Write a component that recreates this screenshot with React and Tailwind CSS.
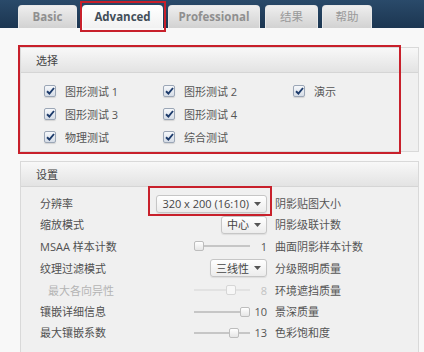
import React from 'react';

function Tab({ label, active, className, highlight, cjk }) {
  return (
    <div
      className={`relative h-[23px] rounded-t-[4px] flex items-center justify-center border border-b-0 ${
        active
          ? 'bg-gradient-to-b from-[#ffffff] to-[#f1f1f1] border-[#ffffff] text-[#434e59]'
          : 'bg-gradient-to-b from-[#eeeeee] to-[#d2d2d2] border-[#e8e8e8] text-[#8f8f8f]'
      } ${className}`}
    >
      <span className={`text-[11.5px] leading-none ${cjk ? 'font-normal text-[#999]' : 'font-bold'}`}>{label}</span>
      {highlight && (
        <span className="absolute left-[-3px] top-[-5px] right-[-4px] bottom-[-4px] border-[2.5px] border-[#c8202b]" />
      )}
    </div>
  );
}

function Check() {
  return (
    <span className="w-[12px] h-[12px] rounded-[2px] border border-[#9ba6b6] bg-gradient-to-b from-[#f6f8fb] to-[#d6dde7] flex items-center justify-center shadow-[0_1px_1px_rgba(0,0,0,0.12)]">
      <svg width="9" height="8" viewBox="0 0 9 8">
        <path d="M1 4.2 L3.4 6.5 L8 1" fill="none" stroke="#1d3b6b" strokeWidth="1.9" />
      </svg>
    </span>
  );
}

function CheckItem({ label, className }) {
  return (
    <div className={`flex items-center gap-[9px] ${className}`}>
      <Check />
      <span className="text-[11px] text-[#555] leading-none">{label}</span>
    </div>
  );
}

function Caret() {
  return (
    <svg width="7" height="4" viewBox="0 0 7 4" className="ml-[5px]">
      <path d="M0 0 L7 0 L3.5 4 Z" fill="#555" />
    </svg>
  );
}

function Select({ value }) {
  return (
    <div className="h-[18px] flex items-center px-[5px] border border-[#c6c6c6] rounded-[3px] bg-gradient-to-b from-[#ffffff] to-[#ececec] shadow-[0_1px_1px_rgba(0,0,0,0.08)]">
      <span className="text-[11px] text-[#454545] leading-none">{value}</span>
      <Caret />
    </div>
  );
}

function Slider({ value, pos, disabled }) {
  return (
    <div className="flex items-center">
      <div className="relative w-[56px] h-[10px] flex items-center">
        <div className={`w-full h-[2px] ${disabled ? 'bg-[#e2e2e2]' : 'bg-[#c6c6c6]'}`} />
        <div
          className={`absolute top-0 w-[10px] h-[10px] rounded-[2px] border ${
            disabled ? 'border-[#d6d6d6] bg-[#f7f7f7]' : 'border-[#bdbdbd] bg-gradient-to-b from-[#ffffff] to-[#e6e6e6]'
          }`}
          style={{ left: pos }}
        />
      </div>
      <span
        className={`w-[17px] text-right text-[11px] leading-none ${disabled ? 'text-[#c2c2c2]' : 'text-[#555]'}`}
      >
        {value}
      </span>
    </div>
  );
}

function Row({ label, control, right, h, dim }) {
  return (
    <div className={`flex items-center ${h}`}>
      <div className="w-[227px] flex items-center justify-between">
        <span
          className={`text-[11px] leading-none ${dim ? 'pl-[8px] text-[#b4b4b4]' : 'text-[#505050]'}`}
        >
          {label}
        </span>
        {control}
      </div>
      <span className="ml-[8px] text-[11px] text-[#555] leading-none">{right}</span>
    </div>
  );
}

function PanelHeader({ title }) {
  return (
    <div className="h-[25px] flex items-center pl-[15px] bg-gradient-to-b from-[#f8f8f8] to-[#e3e3e3] border-b border-[#d5d5d5]">
      <span className="text-[11px] text-[#444] leading-none">{title}</span>
    </div>
  );
}

export default function App() {
  return (
    <div className="w-[424px] h-[352px] overflow-hidden bg-[#f8f8f8] font-['Open_Sans','Noto_Sans_CJK_SC',sans-serif]">
      {/* tab bar */}
      <div className="h-[28px] bg-gradient-to-b from-[#2a4a6a] to-[#1c3651] flex items-end pl-[18px] gap-[5px]">
        <Tab label="Basic" className="w-[59px]" />
        <Tab label="Advanced" active highlight className="w-[81px]" />
        <Tab label="Professional" className="w-[92px]" />
        <Tab label="结果" cjk className="w-[53px]" />
        <Tab label="帮助" cjk className="w-[50px] ml-[-1px]" />
      </div>

      {/* 选择 */}
      <div className="relative ml-[20px] mt-[19px] w-[399px] h-[105px] bg-[#f0f0f0] border border-[#d9d9d9]">
        <PanelHeader title="选择" />
        <div className="grid grid-cols-[119px_130px_1fr] pl-[23px] pt-[12px] gap-y-[11px]">
          <CheckItem label="图形测试 1" />
          <CheckItem label="图形测试 2" />
          <CheckItem label="演示" />
          <CheckItem label="图形测试 3" />
          <CheckItem label="图形测试 4" />
          <div />
          <CheckItem label="物理测试" />
          <CheckItem label="综合测试" />
        </div>
        <span className="absolute left-[-3px] top-[-3px] w-[383px] h-[109px] border-[2.5px] border-[#c8202b]" />
      </div>

      {/* 设置 */}
      <div className="relative ml-[20px] mt-[9px] w-[399px] h-[200px] bg-[#f0f0f0] border border-[#d9d9d9]">
        <PanelHeader title="设置" />
        <div className="pl-[19px] pt-[6px]">
          <Row label="分辨率" control={<Select value="320 x 200 (16:10)" />} right="阴影贴图大小" h="h-[21px]" />
          <Row label="缩放模式" control={<Select value="中心" />} right="阴影级联计数" h="h-[21px]" />
          <Row label="MSAA 样本计数" control={<Slider value="1" pos="0px" />} right="曲面阴影样本计数" h="h-[22px]" />
          <Row label="纹理过滤模式" control={<Select value="三线性" />} right="分级照明质量" h="h-[22px]" />
          <Row label="最大各向异性" dim control={<Slider value="8" pos="32px" disabled />} right="环境遮挡质量" h="h-[22px]" />
          <Row label="镶嵌详细信息" control={<Slider value="10" pos="46px" />} right="景深质量" h="h-[21px]" />
          <Row label="最大镶嵌系数" control={<Slider value="13" pos="35px" />} right="色彩饱和度" h="h-[21px]" />
        </div>
        <span className="absolute left-[127px] top-[24px] w-[124px] h-[30px] border-[2.5px] border-[#c8202b]" />
      </div>
    </div>
  );
}
